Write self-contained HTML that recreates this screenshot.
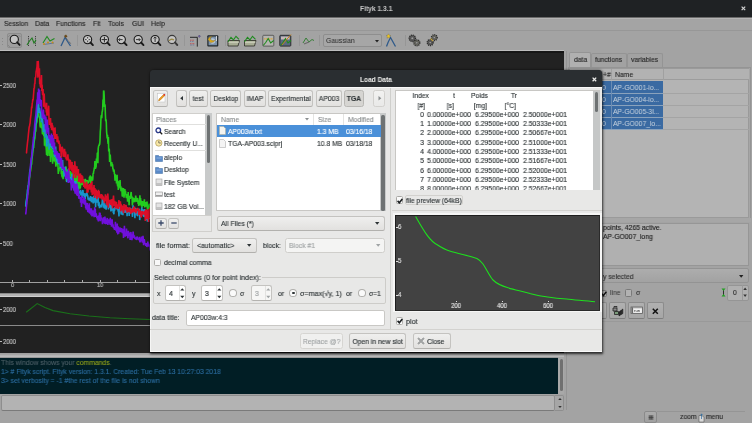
<!DOCTYPE html>
<html><head><meta charset="utf-8">
<style>
*{margin:0;padding:0;box-sizing:border-box}
html,body{width:752px;height:423px;overflow:hidden;background:#a3a3a3;font-family:"Liberation Sans",sans-serif;font-size:7.3px;color:#222}
.a{position:absolute}
.t{position:absolute;white-space:pre;line-height:1;will-change:transform;transform:scaleX(0.93);transform-origin:0 0;-webkit-text-stroke:0.14px currentColor}
svg{position:absolute;overflow:visible}
</style></head><body>
<div class="a" style="left:0px;top:0px;width:752px;height:17px;background:#1f2224"></div>
<div class="t" style="left:359.8px;top:5.10px;font-size:7.2px;color:#c8c8c8;font-weight:bold;-webkit-text-stroke:0">Fityk 1.3.1</div>
<svg style="left:741px;top:6.2px;" width="5" height="5" viewBox="0 0 5 5"><path d="M0.6 0.6L4.2 4.2M4.2 0.6L0.6 4.2" stroke="#d0d0d0" stroke-width="1.2"/></svg>
<div class="a" style="left:0px;top:17px;width:752px;height:14px;background:#a4a4a4;border-top:1px solid #6a6a6a;border-bottom:1px solid #979797"></div>
<div class="a" style="left:0px;top:18px;width:752px;height:1px;background:#b4b4b4"></div>
<div class="t" style="left:4px;top:20.40px;color:#2a2a2a">Session</div>
<div class="t" style="left:35px;top:20.40px;color:#2a2a2a">Data</div>
<div class="t" style="left:56px;top:20.40px;color:#2a2a2a">Functions</div>
<div class="t" style="left:92.5px;top:20.40px;color:#2a2a2a">Fit</div>
<div class="t" style="left:108px;top:20.40px;color:#2a2a2a">Tools</div>
<div class="t" style="left:131.5px;top:20.40px;color:#2a2a2a">GUI</div>
<div class="t" style="left:151px;top:20.40px;color:#2a2a2a">Help</div>
<div class="a" style="left:0px;top:31px;width:752px;height:20px;background:#a3a3a3"></div>
<div class="a" style="left:0px;top:50px;width:564px;height:1px;background:#bdbdbd"></div>
<div class="a" style="left:1.5px;top:37.5px;width:1.2px;height:1.2px;background:#8a8a8a"></div>
<div class="a" style="left:1.5px;top:40.5px;width:1.2px;height:1.2px;background:#8a8a8a"></div>
<div class="a" style="left:1.5px;top:43.5px;width:1.2px;height:1.2px;background:#8a8a8a"></div>
<div class="a" style="left:7.2px;top:33.1px;width:15.3px;height:15.3px;background:#9e9e9e;border:1px solid #8c8c8c;border-radius:2px"></div>
<div class="a" style="left:77px;top:35px;width:1px;height:11px;background:#969696"></div>
<div class="a" style="left:184px;top:35px;width:1px;height:11px;background:#969696"></div>
<div class="a" style="left:224.5px;top:35px;width:1px;height:11px;background:#969696"></div>
<div class="a" style="left:298.5px;top:35px;width:1px;height:11px;background:#969696"></div>
<div class="a" style="left:319px;top:35px;width:1px;height:11px;background:#969696"></div>
<div class="a" style="left:405px;top:35px;width:1px;height:11px;background:#969696"></div>
<div class="a" style="left:323.3px;top:34.3px;width:59px;height:13px;background:#a6a6a6;border:1px solid #8e8e8e;border-radius:2px"></div>
<div class="t" style="left:325.6px;top:37.00px;color:#2a2a2a;-webkit-text-stroke:0">Gaussian</div>
<svg style="left:374.5px;top:39.5px;" width="5" height="3" viewBox="0 0 5 3"><path d="M0 0h4l-2 2.5z" fill="#222"/></svg>
<svg style="left:0px;top:0px;" width="752" height="60" viewBox="0 0 752 60"><circle cx="14.3" cy="39.4" r="4.1" fill="#c4c4c4" stroke="#1a1a1a" stroke-width="1.1"/><line x1="17.2" y1="42.3" x2="19.6" y2="44.9" stroke="#1a1a1a" stroke-width="1.9" stroke-linecap="round"/><path d="M8.5 36.5l1 -1M8.5 45.5l1 1M20 36.5l-1 -1" stroke="#555" stroke-width="0.6"/><path d="M28.5 36v10M35.5 36v10" stroke="#333" stroke-width="0.9" stroke-dasharray="1.2 1"/><path d="M27 45 L29.5 41 L32 38 L34 43 L36 40" stroke="#1f7a1f" stroke-width="1.1" fill="none"/><path d="M43 43 L47 36.5 L50 41 L54.5 38.5" stroke="#1f8a1f" stroke-width="1.1" fill="none"/><path d="M43.5 44.5 L54 43" stroke="#4a6a9a" stroke-width="0.8"/><circle cx="44" cy="44" r="1" fill="#c88a1a"/><circle cx="48" cy="42.5" r="1" fill="#c88a1a"/><circle cx="52.5" cy="42.5" r="1" fill="#c88a1a"/><path d="M61 46 L65 37.5 L70.5 46" stroke="#2f5a8a" stroke-width="1.3" fill="none"/><path d="M64 36 l2 -1.5 l1.5 2 l-2 1.5z" fill="#6a4a1a"/><path d="M66 38 L71 44" stroke="#555" stroke-width="1" stroke-dasharray="1 0.8"/><circle cx="87.6" cy="39.6" r="4.1" fill="#c4c4c4" stroke="#1a1a1a" stroke-width="1.1"/><line x1="90.5" y1="42.5" x2="92.89999999999999" y2="45.1" stroke="#1a1a1a" stroke-width="1.9" stroke-linecap="round"/><path d="M85.0 39.6h5.2M87.6 37.0v5.2" stroke="#3a3a3a" stroke-width="0.9"/><circle cx="87.6" cy="39.6" r="1" fill="#e8e8e8"/><circle cx="104.4" cy="39.6" r="4.1" fill="#c4c4c4" stroke="#1a1a1a" stroke-width="1.1"/><line x1="107.30000000000001" y1="42.5" x2="109.7" y2="45.1" stroke="#1a1a1a" stroke-width="1.9" stroke-linecap="round"/><path d="M101.6 39.6h5.6M104.4 36.8v5.6" stroke="#2a2a2a" stroke-width="1"/><circle cx="121.3" cy="39.6" r="4.1" fill="#c4c4c4" stroke="#1a1a1a" stroke-width="1.1"/><line x1="124.2" y1="42.5" x2="126.6" y2="45.1" stroke="#1a1a1a" stroke-width="1.9" stroke-linecap="round"/><path d="M118.6 39.6h4M120 38.2l-1.4 1.4l1.4 1.4" stroke="#2a2a2a" stroke-width="0.9" fill="none"/><circle cx="138.2" cy="39.6" r="4.1" fill="#c4c4c4" stroke="#1a1a1a" stroke-width="1.1"/><line x1="141.1" y1="42.5" x2="143.5" y2="45.1" stroke="#1a1a1a" stroke-width="1.9" stroke-linecap="round"/><path d="M136 39.6h4.2M138.8 38.2l1.4 1.4l-1.4 1.4" stroke="#2a2a2a" stroke-width="0.9" fill="none"/><circle cx="155.1" cy="39.6" r="4.1" fill="#c4c4c4" stroke="#1a1a1a" stroke-width="1.1"/><line x1="158.0" y1="42.5" x2="160.4" y2="45.1" stroke="#1a1a1a" stroke-width="1.9" stroke-linecap="round"/><path d="M155.1 37v5M153.6 38.4l1.5 -1.5l1.5 1.5" stroke="#2a2a2a" stroke-width="0.9" fill="none"/><circle cx="172" cy="39.5" r="4.1" fill="#c4c4c4" stroke="#3a3a3a" stroke-width="1.1"/><line x1="174.9" y1="42.4" x2="177.3" y2="45.0" stroke="#3a3a3a" stroke-width="1.9" stroke-linecap="round"/><path d="M169 41 q2 -3 5 -1" stroke="#9a8a4a" stroke-width="1.3" fill="none"/><path d="M190 37.3h7.3v9.3" stroke="#1a1a1a" stroke-width="0.9" fill="none"/><path d="M190 40.2h1.5M192.3 40.2h1.5M190 43.7h1.5M192.3 43.7h2" stroke="#c05050" stroke-width="0.9"/><path d="M190 41.5h1.2M192 41.5h1.5M190 45h2.2M192.8 45h1.5" stroke="#5a6a9a" stroke-width="0.6"/><path d="M199.3 35l1.3 1.3l-1.3 1.3l-1.3 -1.3z" fill="#6a5a9a" stroke="#3a3a5a" stroke-width="0.3"/><rect x="207.3" y="35.2" width="11" height="11.3" rx="1" fill="#1e2428"/><rect x="208.5" y="36.5" width="8.6" height="8.8" fill="#7a90a8"/><circle cx="212.5" cy="41" r="2.8" fill="#b8c8d8"/><path d="M216.5 36v5" stroke="#e8e8e8" stroke-width="0.8"/><path d="M208 39.5 q1 -3.5 4.5 -3 q-3 1 -2 3 q2 2 5 0.5 q-2 3 -5 2.5z" fill="#d8a820" stroke="#6a5010" stroke-width="0.3"/><path d="M228.0 40.5 h11.5 l-1.5 5.5 h-10z" fill="#a8ad95" stroke="#2a2a22" stroke-width="0.8"/><path d="M228.5 42.2 h10.5" stroke="#d8dac8" stroke-width="0.9"/><path d="M228.0 41.8 l3 -4.5 l2.5 2.5 l2.5 -3.5 l3 3" stroke="#1f8a1f" stroke-width="1.1" fill="none"/><path d="M244.5 40.5 h11.5 l-1.5 5.5 h-10z" fill="#a8ad95" stroke="#2a2a22" stroke-width="0.8"/><path d="M245 42.2 h10.5" stroke="#d8dac8" stroke-width="0.9"/><path d="M244.5 41.8 l3 -4.5 l2.5 2.5 l2.5 -3.5 l3 3" stroke="#1f8a1f" stroke-width="1.1" fill="none"/><rect x="262.8" y="35.3" width="11" height="10.8" rx="0.8" fill="#b4b4b0" stroke="#4a4a4a" stroke-width="0.8"/><path d="M264 38.8h9" stroke="#d8a840" stroke-width="1.3" stroke-dasharray="1.2 0.5"/><path d="M263.2 45.5 l2.5 -3 l2.5 -4 l2.5 4.5 l3 -2.5" stroke="#1f8a1f" stroke-width="1.1" fill="none"/><rect x="279.8" y="35.3" width="11" height="10.8" rx="0.8" fill="#5a6a80" stroke="#222" stroke-width="0.9"/><rect x="281" y="36.5" width="8.6" height="3" fill="#c8b8b8"/><path d="M280.5 45.5 l2.5 -3 l2.5 -4 l2.5 4.5 l3 -2.5" stroke="#1f8a1f" stroke-width="1.1" fill="none"/><path d="M282 45 l9 -10.5" stroke="#c08020" stroke-width="1"/><path d="M303 43 l3 -5 l3 4 l3 -2.5 l2 1" stroke="#2a7a2a" stroke-width="0.9" fill="none"/><path d="M304 44 l5 -2" stroke="#6a6a6a" stroke-width="1.2"/><path d="M386.5 46.5 Q388 42 390.5 37.5 Q393 42 395.5 46.5" stroke="#2f5a8a" stroke-width="1.3" fill="none"/><path d="M388.5 33.8 l0.8 1.5 l1.6 0.2 l-1.2 1.1 l0.3 1.6 l-1.5 -0.8 l-1.5 0.8 l0.3 -1.6 l-1.2 -1.1 l1.6 -0.2z" fill="#f0c820" stroke="#555" stroke-width="0.3"/><circle cx="412.3" cy="38.3" r="3.2" fill="#5a5a5a" stroke="#2a2a2a" stroke-width="1.3" stroke-dasharray="1 0.9"/><circle cx="412.3" cy="38.3" r="1.2160000000000002" fill="#a3a3a3" stroke="#333" stroke-width="0.4"/><circle cx="416.8" cy="42.8" r="3" fill="#6a6a62" stroke="#2a2a2a" stroke-width="1.3" stroke-dasharray="1 0.9"/><circle cx="416.8" cy="42.8" r="1.1400000000000001" fill="#a3a3a3" stroke="#333" stroke-width="0.4"/><circle cx="434.3" cy="37.6" r="2.9" fill="#6a6a62" stroke="#2a2a2a" stroke-width="1.3" stroke-dasharray="1 0.9"/><circle cx="434.3" cy="37.6" r="1.1019999999999999" fill="#a3a3a3" stroke="#333" stroke-width="0.4"/><circle cx="430.2" cy="42.6" r="3" fill="#5a5a5a" stroke="#2a2a2a" stroke-width="1.3" stroke-dasharray="1 0.9"/><circle cx="430.2" cy="42.6" r="1.1400000000000001" fill="#a3a3a3" stroke="#333" stroke-width="0.4"/><path d="M430.5 38.5 l2.5 2.5" stroke="#c0a040" stroke-width="1.3"/></svg>
<div class="a" style="left:0px;top:51px;width:564px;height:242px;background:#222222;border-top:2px solid #161616"></div>
<div class="a" style="left:0px;top:293px;width:564px;height:4px;background:#b4b4b4;border-top:1px solid #8a8a8a;border-bottom:1px solid #d0d0d0"></div>
<div class="a" style="left:0px;top:297px;width:564px;height:55.5px;background:#212121"></div>
<div class="a" style="left:0px;top:325px;width:564px;height:1px;background:#8a8a8a"></div>
<div class="a" style="left:0px;top:352.5px;width:564px;height:5.5px;background:linear-gradient(#9c9c9c 0%,#a8a8a8 40%,#c4c4c4 65%,#a0a0a0 85%,#8a8a8a 100%)"></div>
<div class="a" style="left:0px;top:84.5px;width:2.4px;height:1px;background:#b8b8b8"></div>
<div class="t" style="left:2.6px;top:82.80px;font-size:6.3px;color:#c4c4c4">2500</div>
<div class="a" style="left:0px;top:124.0px;width:2.4px;height:1px;background:#b8b8b8"></div>
<div class="t" style="left:2.6px;top:122.30px;font-size:6.3px;color:#c4c4c4">2000</div>
<div class="a" style="left:0px;top:163.5px;width:2.4px;height:1px;background:#b8b8b8"></div>
<div class="t" style="left:2.6px;top:161.80px;font-size:6.3px;color:#c4c4c4">1500</div>
<div class="a" style="left:0px;top:203.0px;width:2.4px;height:1px;background:#b8b8b8"></div>
<div class="t" style="left:2.6px;top:201.30px;font-size:6.3px;color:#c4c4c4">1000</div>
<div class="a" style="left:0px;top:242.5px;width:2.4px;height:1px;background:#b8b8b8"></div>
<div class="t" style="left:2.6px;top:240.80px;font-size:6.3px;color:#c4c4c4">500</div>
<div class="a" style="left:0px;top:282px;width:564px;height:1px;background:#a0a0a0"></div>
<div class="a" style="left:11.7px;top:280px;width:1px;height:2.2px;background:#b0b0b0"></div>
<div class="a" style="left:29.259999999999998px;top:280px;width:1px;height:2.2px;background:#b0b0b0"></div>
<div class="a" style="left:46.81999999999999px;top:280px;width:1px;height:2.2px;background:#b0b0b0"></div>
<div class="a" style="left:64.38px;top:280px;width:1px;height:2.2px;background:#b0b0b0"></div>
<div class="a" style="left:81.94px;top:280px;width:1px;height:2.2px;background:#b0b0b0"></div>
<div class="a" style="left:99.5px;top:280px;width:1px;height:2.2px;background:#b0b0b0"></div>
<div class="a" style="left:117.05999999999999px;top:280px;width:1px;height:2.2px;background:#b0b0b0"></div>
<div class="a" style="left:134.61999999999998px;top:280px;width:1px;height:2.2px;background:#b0b0b0"></div>
<div class="a" style="left:152.17999999999998px;top:280px;width:1px;height:2.2px;background:#b0b0b0"></div>
<div class="a" style="left:169.73999999999998px;top:280px;width:1px;height:2.2px;background:#b0b0b0"></div>
<div class="a" style="left:187.29999999999998px;top:280px;width:1px;height:2.2px;background:#b0b0b0"></div>
<div class="a" style="left:204.85999999999999px;top:280px;width:1px;height:2.2px;background:#b0b0b0"></div>
<div class="a" style="left:222.41999999999996px;top:280px;width:1px;height:2.2px;background:#b0b0b0"></div>
<div class="a" style="left:239.97999999999996px;top:280px;width:1px;height:2.2px;background:#b0b0b0"></div>
<div class="a" style="left:257.53999999999996px;top:280px;width:1px;height:2.2px;background:#b0b0b0"></div>
<div class="a" style="left:275.09999999999997px;top:280px;width:1px;height:2.2px;background:#b0b0b0"></div>
<div class="a" style="left:292.65999999999997px;top:280px;width:1px;height:2.2px;background:#b0b0b0"></div>
<div class="a" style="left:310.21999999999997px;top:280px;width:1px;height:2.2px;background:#b0b0b0"></div>
<div class="a" style="left:327.78px;top:280px;width:1px;height:2.2px;background:#b0b0b0"></div>
<div class="a" style="left:345.34px;top:280px;width:1px;height:2.2px;background:#b0b0b0"></div>
<div class="a" style="left:362.9px;top:280px;width:1px;height:2.2px;background:#b0b0b0"></div>
<div class="a" style="left:380.46px;top:280px;width:1px;height:2.2px;background:#b0b0b0"></div>
<div class="a" style="left:398.02px;top:280px;width:1px;height:2.2px;background:#b0b0b0"></div>
<div class="a" style="left:415.58px;top:280px;width:1px;height:2.2px;background:#b0b0b0"></div>
<div class="a" style="left:433.13999999999993px;top:280px;width:1px;height:2.2px;background:#b0b0b0"></div>
<div class="a" style="left:450.69999999999993px;top:280px;width:1px;height:2.2px;background:#b0b0b0"></div>
<div class="a" style="left:468.25999999999993px;top:280px;width:1px;height:2.2px;background:#b0b0b0"></div>
<div class="a" style="left:485.81999999999994px;top:280px;width:1px;height:2.2px;background:#b0b0b0"></div>
<div class="a" style="left:503.37999999999994px;top:280px;width:1px;height:2.2px;background:#b0b0b0"></div>
<div class="a" style="left:520.9399999999999px;top:280px;width:1px;height:2.2px;background:#b0b0b0"></div>
<div class="a" style="left:538.5px;top:280px;width:1px;height:2.2px;background:#b0b0b0"></div>
<div class="a" style="left:556.0600000000001px;top:280px;width:1px;height:2.2px;background:#b0b0b0"></div>
<div class="t" style="left:10.8px;top:281.90px;font-size:6px;color:#b8b8b8">0</div>
<div class="t" style="left:97.2px;top:281.90px;font-size:6px;color:#b8b8b8">10</div>
<div class="a" style="left:0px;top:308.5px;width:2.4px;height:1px;background:#b8b8b8"></div>
<div class="t" style="left:2.6px;top:306.80px;font-size:6.3px;color:#c4c4c4">2000</div>
<div class="a" style="left:0px;top:340.5px;width:2.4px;height:1px;background:#b8b8b8"></div>
<div class="t" style="left:2.6px;top:338.80px;font-size:6.3px;color:#c4c4c4">2000</div>
<svg style="left:0;top:51px" width="564" height="242" viewBox="0 51 564 242"><polyline points="25.90 207.0 26.20 204.6 26.50 203.8 26.80 198.7 27.10 198.2 27.40 193.8 27.70 194.6 28.00 191.4 28.30 190.1 28.60 185.9 28.90 184.4 29.20 181.3 29.50 178.4 29.80 176.9 30.10 173.0 30.40 171.5 30.70 170.3 31.00 167.2 31.30 164.3 31.60 164.8 31.90 160.0 32.20 156.8 32.50 155.3 32.80 152.1 33.10 149.8 33.40 147.5 33.70 147.9 34.00 143.1 34.30 140.9 34.60 139.1 34.90 138.3 35.20 133.2 35.50 130.3 35.80 131.8 36.10 124.4 36.40 123.4 36.70 122.3 37.00 122.0 37.30 112.5 37.60 103.5 37.90 114.7 38.20 109.5 38.50 111.4 38.80 116.4 39.10 116.7 39.40 118.2 39.70 116.3 40.00 125.1 40.30 127.3 40.60 122.2 40.90 121.4 41.20 127.7 41.50 127.9 41.80 122.7 42.10 126.5 42.40 134.1 42.70 130.6 43.00 130.9 43.30 134.4 43.60 134.7 43.90 136.1 44.20 129.4 44.50 145.8 44.80 140.7 45.10 137.6 45.40 146.4 45.70 145.0 46.00 145.1 46.30 149.7 46.60 155.0 46.90 148.8 47.20 153.4 47.50 156.1 47.80 144.1 48.10 146.6 48.40 152.2 48.70 143.0 49.00 149.2 49.30 155.8 49.60 155.3 49.90 154.0 50.20 144.9 50.50 161.9 50.80 155.4 51.10 156.8 51.40 156.3 51.70 148.3 52.00 149.9 52.30 151.3 52.60 163.8 52.90 153.8 53.20 156.6 53.50 157.0 53.80 160.7 54.10 160.9 54.40 160.6 54.70 155.3 55.00 150.8 55.30 161.7 55.60 162.6 55.90 166.8 56.20 162.3 56.50 160.9 56.80 165.2 57.10 158.5 57.40 160.9 57.70 161.6 58.00 166.9 58.30 174.0 58.60 169.6 58.90 171.5 59.20 168.7 59.50 169.4 59.80 167.3 60.10 168.4 60.40 161.2 60.70 166.2 61.00 166.4 61.30 174.2 61.60 173.7 61.90 175.6 62.20 177.3 62.50 170.8 62.80 175.8 63.10 179.2 63.40 172.4 63.70 176.5 64.00 172.2 64.30 167.2 64.60 173.6 64.90 170.4 65.20 173.9 65.50 172.0 65.80 175.0 66.10 166.5 66.40 181.6 66.70 179.2 67.00 173.3 67.30 171.5 67.60 174.9 67.90 177.5 68.20 176.8 68.50 176.9 68.80 168.7 69.10 171.8 69.40 180.7 69.70 177.0 70.00 171.0 70.30 173.5 70.60 171.6 70.90 173.3 71.20 181.2 71.50 176.5 71.80 181.4 72.10 178.2 72.40 172.5 72.70 175.7 73.00 186.2 73.30 175.6 73.60 174.8 73.90 183.1 74.20 179.3 74.50 179.1 74.80 184.5 75.10 173.4 75.40 181.2 75.70 176.2 76.00 175.2 76.30 177.5 76.60 184.6 76.90 180.3 77.20 174.5 77.50 177.3 77.80 186.7 78.10 185.1 78.40 178.0 78.70 190.4 79.00 180.9 79.30 178.2 79.60 182.1 79.90 186.0 80.20 188.5 80.50 186.7 80.80 181.9 81.10 181.6 81.40 178.7 81.70 183.7 82.00 182.1 82.30 185.2 82.60 180.1 82.90 182.5 83.20 181.1 83.50 179.9 83.80 179.8 84.10 180.3 84.40 179.5 84.70 185.5 85.00 183.7 85.30 178.7 85.60 184.9 85.90 184.0 86.20 187.9 86.50 182.0 86.80 181.8 87.10 180.0 87.40 182.7 87.70 183.9 88.00 182.6 88.30 180.7 88.60 183.2 88.90 181.2 89.20 181.4 89.50 176.8 89.80 180.5 90.10 175.9 90.40 176.0 90.70 179.2 91.00 185.7 91.30 181.4 91.60 177.5 91.90 176.5 92.20 180.0 92.50 180.6 92.80 179.2 93.10 173.3 93.40 173.8 93.70 171.1 94.00 170.5 94.30 167.5 94.60 168.9 94.90 161.0 95.20 163.7 95.50 169.0 95.80 163.1 96.10 167.4 96.40 158.5 96.70 160.0 97.00 161.0 97.30 153.4 97.60 152.7 97.90 163.3 98.20 148.8 98.50 146.7 98.80 145.3 99.10 145.8 99.40 143.5 99.70 144.6 100.00 140.2 100.30 131.6 100.60 128.1 100.90 119.8 101.20 115.7 101.50 115.4 101.80 118.3 102.10 111.9 102.40 111.4 102.70 108.4 103.00 99.6 103.30 106.7 103.60 90.6 103.90 91.3 104.20 95.9 104.50 106.9 104.80 104.6 105.10 105.5 105.40 114.5 105.70 121.2 106.00 119.3 106.30 122.3 106.60 131.8 106.90 134.9 107.20 138.4 107.50 134.8 107.80 141.3 108.10 143.8 108.40 137.1 108.70 151.4 109.00 149.1 109.30 149.5 109.60 162.0 109.90 155.7 110.20 154.5 110.50 159.2 110.80 163.7 111.10 166.4 111.40 164.1 111.70 162.1 112.00 163.8 112.30 164.4 112.60 164.5 112.90 169.4 113.20 168.7 113.50 171.7 113.80 169.5 114.10 170.4 114.40 173.9 114.70 174.3 115.00 180.7 115.30 174.4 115.60 179.4 115.90 179.5 116.20 175.8 116.50 183.4 116.80 182.0 117.10 174.7 117.40 184.6 117.70 186.3 118.00 180.9 118.30 190.0 118.60 185.2 118.90 181.3 119.20 187.7 119.50 185.1 119.80 182.3 120.10 180.1 120.40 188.7 120.70 186.0 121.00 191.2 121.30 190.6 121.60 187.9 121.90 188.2 122.20 196.1 122.50 196.2 122.80 193.4 123.10 190.0 123.40 188.2 123.70 190.5 124.00 197.6 124.30 193.9 124.60 191.8 124.90 189.0 125.20 193.9 125.50 190.8 125.80 194.0 126.10 196.7 126.40 198.1 126.70 195.4 127.00 194.1 127.30 196.3 127.60 201.7 127.90 197.4 128.20 192.0 128.50 201.8 128.80 197.8 129.10 205.3 129.40 195.8 129.70 197.1 130.00 196.6 130.30 198.9 130.60 196.0 130.90 193.3 131.20 192.0 131.50 197.8 131.80 196.7 132.10 196.7 132.40 205.4 132.70 201.3 133.00 202.4 133.30 197.5 133.60 200.1 133.90 198.6 134.20 198.8 134.50 201.9 134.80 201.6 135.10 200.8 135.40 200.4 135.70 195.6 136.00 197.9 136.30 201.6 136.60 199.4 136.90 198.2 137.20 201.9 137.50 198.0 137.80 198.9 138.10 203.9 138.40 200.2 138.70 205.9 139.00 203.2 139.30 204.2 139.60 205.3 139.90 195.3 140.20 201.8 140.50 198.2 140.80 200.8 141.10 202.0 141.40 206.3 141.70 202.4 142.00 207.7 142.30 201.1 142.60 202.7 142.90 203.3 143.20 206.0 143.50 203.0 143.80 201.4 144.10 202.4 144.40 199.2 144.70 207.4 145.00 206.0 145.30 205.1 145.60 204.7 145.90 202.1 146.20 202.8 146.50 206.6 146.80 201.9 147.10 202.0 147.40 209.3 147.70 209.3 148.00 205.6 148.30 206.4 148.60 205.4 148.90 209.3 149.20 203.7 149.50 205.4 149.80 206.7 150.10 209.7 150.40 204.7 150.70 206.3 151.00 204.2 151.30 203.8 151.60 203.9 151.90 206.2" fill="none" stroke="#22cc1e" stroke-width="1.6" stroke-linejoin="bevel"/><polyline points="25.70 206.4 26.00 201.9 26.30 200.4 26.60 198.8 26.90 197.6 27.20 193.8 27.50 189.8 27.80 189.2 28.10 185.3 28.40 185.3 28.70 181.3 29.00 181.0 29.30 176.6 29.60 173.2 29.90 170.3 30.20 169.0 30.50 167.5 30.80 165.9 31.10 162.4 31.40 158.8 31.70 157.8 32.00 153.1 32.30 152.9 32.60 149.0 32.90 149.2 33.20 146.2 33.50 143.0 33.80 138.9 34.10 138.4 34.40 135.7 34.70 132.1 35.00 129.6 35.30 129.6 35.60 125.0 35.90 123.6 36.20 122.4 36.50 116.3 36.80 118.1 37.10 117.8 37.40 108.0 37.70 104.2 38.00 100.5 38.30 111.2 38.60 96.4 38.90 113.1 39.20 110.7 39.50 107.9 39.80 109.7 40.10 111.3 40.40 112.9 40.70 118.8 41.00 112.2 41.30 121.7 41.60 122.2 41.90 117.8 42.20 122.5 42.50 118.5 42.80 122.1 43.10 125.0 43.40 132.1 43.70 124.6 44.00 125.2 44.30 126.9 44.60 127.0 44.90 124.2 45.20 137.7 45.50 128.1 45.80 129.3 46.10 129.8 46.40 136.6 46.70 145.5 47.00 146.4 47.30 140.8 47.60 139.1 47.90 138.6 48.20 135.3 48.50 143.1 48.80 140.3 49.10 149.7 49.40 140.8 49.70 138.5 50.00 135.8 50.30 136.6 50.60 146.9 50.90 146.4 51.20 141.0 51.50 140.2 51.80 148.0 52.10 146.1 52.40 149.0 52.70 148.7 53.00 146.3 53.30 143.2 53.60 151.2 53.90 151.6 54.20 152.6 54.50 156.2 54.80 156.7 55.10 151.8 55.40 156.6 55.70 146.6 56.00 158.2 56.30 156.1 56.60 160.8 56.90 161.3 57.20 154.5 57.50 158.2 57.80 163.6 58.10 157.9 58.40 160.9 58.70 158.9 59.00 164.1 59.30 163.6 59.60 160.0 59.90 158.4 60.20 156.1 60.50 168.1 60.80 163.9 61.10 163.6 61.40 164.6 61.70 163.6 62.00 169.9 62.30 170.1 62.60 160.0 62.90 168.5 63.20 169.4 63.50 168.3 63.80 170.3 64.10 176.4 64.40 171.9 64.70 175.5 65.00 175.2 65.30 166.5 65.60 178.8 65.90 173.6 66.20 172.2 66.50 176.7 66.80 182.1 67.10 171.7 67.40 172.5 67.70 176.6 68.00 169.4 68.30 172.2 68.60 176.8 68.90 179.6 69.20 179.3 69.50 180.8 69.80 182.1 70.10 177.1 70.40 177.9 70.70 178.4 71.00 178.8 71.30 184.2 71.60 183.8 71.90 174.0 72.20 183.3 72.50 178.3 72.80 178.6 73.10 187.3 73.40 187.8 73.70 187.7 74.00 186.4 74.30 190.7 74.60 181.0 74.90 188.2 75.20 183.4 75.50 184.1 75.80 181.0 76.10 192.2 76.40 193.4 76.70 190.8 77.00 186.3 77.30 189.3 77.60 185.5 77.90 188.6 78.20 195.0 78.50 195.7 78.80 193.0 79.10 193.7 79.40 190.9 79.70 192.7 80.00 191.1 80.30 193.4 80.60 189.9 80.90 195.5 81.20 191.6 81.50 193.2 81.80 192.3 82.10 197.9 82.40 196.0 82.70 190.6 83.00 190.3 83.30 195.5 83.60 194.1 83.90 193.2 84.20 194.8 84.50 199.7 84.80 194.2 85.10 199.3 85.40 193.2 85.70 194.2 86.00 196.2 86.30 195.1 86.60 193.9 86.90 192.3 87.20 194.8 87.50 194.8 87.80 196.2 88.10 199.8 88.40 198.3 88.70 200.5 89.00 197.6 89.30 198.6 89.60 199.3 89.90 199.8 90.20 200.9 90.50 196.1 90.80 199.4 91.10 198.9 91.40 202.3 91.70 201.2 92.00 196.9 92.30 200.3 92.60 201.3 92.90 199.5 93.20 203.4 93.50 200.5 93.80 195.8 94.10 201.0 94.40 202.6 94.70 197.8 95.00 202.7 95.30 192.6 95.60 207.2 95.90 196.7 96.20 199.7 96.50 200.4 96.80 197.2 97.10 202.7 97.40 199.1 97.70 197.9 98.00 195.1 98.30 204.6 98.60 206.2 98.90 201.9 99.20 203.6 99.50 208.1 99.80 204.5 100.10 207.0 100.40 206.7 100.70 206.0 101.00 205.4 101.30 207.5 101.60 204.7 101.90 204.5 102.20 202.0 102.50 198.0 102.80 201.6 103.10 203.5 103.40 207.7 103.70 203.6 104.00 198.7 104.30 206.9 104.60 208.7 104.90 206.0 105.20 206.0 105.50 206.1 105.80 205.1 106.10 209.7 106.40 203.0 106.70 203.3 107.00 201.3 107.30 204.3 107.60 203.8 107.90 204.0 108.20 206.7 108.50 209.4 108.80 202.2 109.10 206.7 109.40 204.4 109.70 204.6 110.00 205.3 110.30 207.9 110.60 202.0 110.90 211.5 111.20 206.8 111.50 205.0 111.80 202.4 112.10 210.5 112.40 209.5 112.70 210.2 113.00 208.1 113.30 212.9 113.60 212.5 113.90 214.3 114.20 209.0 114.50 210.9 114.80 207.0 115.10 208.6 115.40 207.4 115.70 208.5 116.00 208.7 116.30 208.6 116.60 208.6 116.90 209.2 117.20 207.6 117.50 206.8 117.80 207.6 118.10 211.0 118.40 211.2 118.70 212.4 119.00 216.4 119.30 206.3 119.60 211.9 119.90 205.6 120.20 207.9 120.50 207.2 120.80 209.9 121.10 213.7 121.40 214.4 121.70 211.0 122.00 212.9 122.30 211.4 122.60 206.5 122.90 215.1 123.20 208.5 123.50 208.9 123.80 210.3 124.10 207.7 124.40 208.7 124.70 212.9 125.00 208.0 125.30 209.0 125.60 205.9 125.90 205.5 126.20 212.0 126.50 212.4 126.80 210.2 127.10 216.3 127.40 208.5 127.70 213.0 128.00 209.4 128.30 211.5 128.60 213.2 128.90 207.8 129.20 215.9 129.50 211.7 129.80 212.2 130.10 211.6 130.40 213.2 130.70 208.6 131.00 208.7 131.30 213.3 131.60 211.7 131.90 211.2 132.20 213.3 132.50 216.9 132.80 209.5 133.10 205.4 133.40 211.6 133.70 207.6 134.00 211.9 134.30 209.9 134.60 212.8 134.90 218.1 135.20 212.5 135.50 208.0 135.80 209.7 136.10 209.8 136.40 208.8 136.70 214.3 137.00 213.6 137.30 216.0 137.60 215.5 137.90 212.8 138.20 211.5 138.50 211.8 138.80 213.2 139.10 211.4 139.40 208.7 139.70 220.1 140.00 217.5 140.30 212.7 140.60 212.2 140.90 212.5 141.20 214.9 141.50 212.7 141.80 207.4 142.10 214.5 142.40 215.3 142.70 209.9 143.00 209.7 143.30 213.6 143.60 210.7 143.90 216.9 144.20 216.4 144.50 209.1 144.80 215.4 145.10 209.9 145.40 212.1 145.70 218.0 146.00 213.5 146.30 216.1 146.60 213.1 146.90 220.1 147.20 214.4 147.50 221.7 147.80 216.1 148.10 213.5 148.40 214.8 148.70 213.9 149.00 219.0 149.30 211.7 149.60 217.3 149.90 219.0 150.20 217.9 150.50 211.1 150.80 218.6 151.10 217.4 151.40 218.2 151.70 212.2 152.00 215.6" fill="none" stroke="#1896cc" stroke-width="1.6" stroke-linejoin="bevel"/><polyline points="25.70 214.5 26.00 212.2 26.30 208.6 26.60 205.5 26.90 202.0 27.20 199.7 27.50 197.9 27.80 194.3 28.10 192.0 28.40 188.2 28.70 185.4 29.00 182.2 29.30 177.4 29.60 177.0 29.90 173.7 30.20 170.7 30.50 165.4 30.80 162.3 31.10 160.3 31.40 157.8 31.70 155.7 32.00 152.3 32.30 150.0 32.60 145.7 32.90 143.8 33.20 141.0 33.50 136.7 33.80 136.7 34.10 132.3 34.40 130.1 34.70 124.9 35.00 121.7 35.30 119.3 35.60 116.6 35.90 114.6 36.20 111.1 36.50 107.2 36.80 103.6 37.10 99.5 37.40 104.6 37.70 92.2 38.00 94.1 38.30 96.2 38.60 88.5 38.90 96.9 39.20 104.0 39.50 89.9 39.80 98.9 40.10 101.2 40.40 99.2 40.70 106.4 41.00 105.1 41.30 100.0 41.60 111.6 41.90 112.1 42.20 114.5 42.50 118.0 42.80 114.4 43.10 114.6 43.40 109.6 43.70 119.2 44.00 115.1 44.30 117.0 44.60 114.7 44.90 117.3 45.20 120.4 45.50 129.5 45.80 116.5 46.10 120.1 46.40 128.0 46.70 133.9 47.00 131.0 47.30 121.3 47.60 119.5 47.90 132.3 48.20 128.5 48.50 127.7 48.80 137.2 49.10 138.5 49.40 135.3 49.70 136.4 50.00 138.0 50.30 143.5 50.60 140.2 50.90 140.6 51.20 141.5 51.50 133.6 51.80 146.0 52.10 145.4 52.40 144.4 52.70 135.1 53.00 141.3 53.30 147.9 53.60 138.1 53.90 145.4 54.20 150.9 54.50 142.5 54.80 154.7 55.10 151.3 55.40 149.3 55.70 152.0 56.00 154.0 56.30 152.7 56.60 157.4 56.90 151.2 57.20 152.8 57.50 159.0 57.80 155.7 58.10 152.8 58.40 160.4 58.70 163.0 59.00 156.3 59.30 153.4 59.60 158.7 59.90 159.2 60.20 159.3 60.50 166.3 60.80 157.8 61.10 166.9 61.40 158.1 61.70 160.5 62.00 166.3 62.30 168.8 62.60 168.4 62.90 167.1 63.20 166.9 63.50 167.6 63.80 169.7 64.10 167.6 64.40 169.8 64.70 171.5 65.00 170.0 65.30 173.3 65.60 173.2 65.90 179.0 66.20 173.6 66.50 171.5 66.80 172.3 67.10 174.2 67.40 178.1 67.70 174.2 68.00 177.4 68.30 183.0 68.60 168.3 68.90 173.9 69.20 179.2 69.50 180.4 69.80 180.4 70.10 178.7 70.40 182.9 70.70 182.2 71.00 179.9 71.30 190.5 71.60 183.9 71.90 181.4 72.20 183.4 72.50 183.5 72.80 184.5 73.10 176.6 73.40 184.2 73.70 189.7 74.00 182.9 74.30 187.1 74.60 191.0 74.90 191.2 75.20 193.7 75.50 183.8 75.80 188.7 76.10 189.3 76.40 192.9 76.70 194.9 77.00 183.5 77.30 195.9 77.60 188.3 77.90 195.6 78.20 189.2 78.50 195.0 78.80 198.8 79.10 195.0 79.40 196.6 79.70 199.0 80.00 197.4 80.30 197.1 80.60 202.6 80.90 201.4 81.20 197.6 81.50 207.0 81.80 195.8 82.10 202.6 82.40 199.3 82.70 200.9 83.00 203.1 83.30 202.0 83.60 203.6 83.90 197.4 84.20 197.9 84.50 204.7 84.80 200.3 85.10 200.5 85.40 199.6 85.70 208.2 86.00 207.0 86.30 209.6 86.60 202.8 86.90 206.0 87.20 203.0 87.50 209.0 87.80 211.8 88.10 204.9 88.40 212.5 88.70 211.2 89.00 208.2 89.30 203.3 89.60 213.6 89.90 209.6 90.20 208.4 90.50 211.6 90.80 211.8 91.10 215.2 91.40 208.2 91.70 214.6 92.00 215.9 92.30 216.0 92.60 211.6 92.90 210.2 93.20 215.5 93.50 213.1 93.80 213.4 94.10 217.3 94.40 212.8 94.70 207.3 95.00 212.9 95.30 209.0 95.60 216.8 95.90 215.6 96.20 213.3 96.50 215.2 96.80 217.8 97.10 215.9 97.40 219.6 97.70 216.0 98.00 219.3 98.30 220.8 98.60 221.3 98.90 215.3 99.20 219.8 99.50 212.5 99.80 214.9 100.10 212.7 100.40 221.1 100.70 215.1 101.00 218.5 101.30 218.2 101.60 218.9 101.90 217.5 102.20 219.9 102.50 224.3 102.80 219.8 103.10 221.2 103.40 222.7 103.70 219.6 104.00 217.0 104.30 219.0 104.60 223.6 104.90 216.5 105.20 219.4 105.50 223.9 105.80 223.5 106.10 221.6 106.40 223.9 106.70 222.3 107.00 219.0 107.30 218.1 107.60 220.7 107.90 225.0 108.20 221.3 108.50 220.6 108.80 221.1 109.10 219.3 109.40 223.2 109.70 220.6 110.00 224.8 110.30 217.9 110.60 225.0 110.90 222.7 111.20 219.5 111.50 226.6 111.80 224.2 112.10 219.3 112.40 223.0 112.70 226.2 113.00 224.4 113.30 227.8 113.60 227.8 113.90 227.8 114.20 227.1 114.50 229.9 114.80 228.3 115.10 228.0 115.40 221.7 115.70 229.4 116.00 230.6 116.30 226.8 116.60 226.5 116.90 232.7 117.20 223.6 117.50 229.4 117.80 234.4 118.10 226.2 118.40 230.5 118.70 233.6 119.00 228.8 119.30 230.7 119.60 231.7 119.90 227.4 120.20 229.6 120.50 230.7 120.80 232.2 121.10 230.2 121.40 230.0 121.70 228.2 122.00 230.0 122.30 233.2 122.60 231.4 122.90 229.3 123.20 229.5 123.50 238.0 123.80 234.6 124.10 233.6 124.40 225.9 124.70 233.8 125.00 233.7 125.30 236.7 125.60 233.8 125.90 232.8 126.20 234.3 126.50 228.6 126.80 235.9 127.10 234.3 127.40 232.0 127.70 237.0 128.00 238.3 128.30 230.8 128.60 232.7 128.90 235.1 129.20 235.0 129.50 233.8 129.80 232.6 130.10 240.0 130.40 237.6 130.70 232.6 131.00 232.4 131.30 239.6 131.60 238.1 131.90 240.2 132.20 238.0 132.50 234.2 132.80 237.0 133.10 231.6 133.40 235.0 133.70 236.7 134.00 238.2 134.30 235.5 134.60 237.0 134.90 238.5 135.20 238.5 135.50 239.2 135.80 238.4 136.10 237.3 136.40 240.0 136.70 238.5 137.00 236.6 137.30 237.2 137.60 238.8 137.90 238.7 138.20 239.5 138.50 239.2 138.80 239.8 139.10 239.3 139.40 236.9 139.70 240.8 140.00 242.3 140.30 241.1 140.60 239.9 140.90 241.4 141.20 238.5 141.50 236.6 141.80 241.0 142.10 239.0 142.40 242.8 142.70 239.0 143.00 235.8 143.30 239.4 143.60 245.2 143.90 241.1 144.20 239.1 144.50 240.6 144.80 243.5 145.10 243.6 145.40 243.1 145.70 246.0 146.00 244.5 146.30 243.1 146.60 244.6 146.90 247.0 147.20 245.7 147.50 245.9 147.80 241.6 148.10 243.7 148.40 245.7 148.70 243.7 149.00 246.7 149.30 245.9 149.60 246.7 149.90 244.5 150.20 250.4 150.50 247.8 150.80 245.0 151.10 245.7 151.40 251.1 151.70 245.1 152.00 247.8" fill="none" stroke="#7010dc" stroke-width="1.6" stroke-linejoin="bevel"/><polyline points="26.20 152.9 26.50 153.1 26.80 149.0 27.10 146.6 27.40 143.6 27.70 140.9 28.00 138.8 28.30 135.6 28.60 132.3 28.90 129.6 29.20 126.9 29.50 126.3 29.80 124.3 30.10 123.3 30.40 119.4 30.70 116.7 31.00 114.8 31.30 111.5 31.60 106.5 31.90 108.1 32.20 103.6 32.50 102.2 32.80 99.1 33.10 100.5 33.40 96.2 33.70 92.8 34.00 88.1 34.30 88.7 34.60 83.6 34.90 84.2 35.20 77.8 35.50 77.5 35.80 76.7 36.10 71.5 36.40 70.6 36.70 68.3 37.00 67.1 37.30 61.1 37.60 68.8 37.90 77.6 38.20 60.9 38.50 65.8 38.80 74.3 39.10 70.2 39.40 68.3 39.70 84.1 40.00 83.4 40.30 85.7 40.60 87.3 40.90 87.1 41.20 81.1 41.50 75.1 41.80 91.0 42.10 84.9 42.40 92.0 42.70 95.3 43.00 89.0 43.30 95.1 43.60 106.8 43.90 103.8 44.20 93.6 44.50 101.4 44.80 103.3 45.10 107.1 45.40 108.9 45.70 106.0 46.00 106.3 46.30 112.5 46.60 102.7 46.90 115.7 47.20 112.9 47.50 110.1 47.80 110.7 48.10 115.5 48.40 108.7 48.70 105.7 49.00 119.1 49.30 125.0 49.60 118.7 49.90 120.6 50.20 121.3 50.50 118.0 50.80 125.2 51.10 128.0 51.40 125.5 51.70 130.3 52.00 122.8 52.30 129.2 52.60 125.4 52.90 127.2 53.20 131.2 53.50 131.4 53.80 135.1 54.10 135.0 54.40 127.7 54.70 139.0 55.00 127.4 55.30 134.4 55.60 136.8 55.90 135.8 56.20 138.9 56.50 137.6 56.80 134.0 57.10 142.2 57.40 139.3 57.70 136.3 58.00 141.1 58.30 141.4 58.60 143.6 58.90 140.5 59.20 144.3 59.50 143.5 59.80 151.5 60.10 144.2 60.40 151.5 60.70 146.7 61.00 152.3 61.30 157.8 61.60 147.6 61.90 150.4 62.20 146.7 62.50 148.0 62.80 149.1 63.10 152.2 63.40 156.1 63.70 156.4 64.00 151.5 64.30 154.5 64.60 148.7 64.90 157.2 65.20 154.5 65.50 151.7 65.80 153.6 66.10 159.2 66.40 157.9 66.70 160.5 67.00 156.8 67.30 159.6 67.60 158.6 67.90 154.2 68.20 159.9 68.50 160.5 68.80 158.9 69.10 165.1 69.40 170.7 69.70 168.5 70.00 163.8 70.30 159.7 70.60 163.9 70.90 162.8 71.20 166.2 71.50 170.6 71.80 166.5 72.10 161.9 72.40 172.5 72.70 168.1 73.00 173.3 73.30 165.4 73.60 178.2 73.90 164.9 74.20 170.3 74.50 173.1 74.80 161.2 75.10 168.0 75.40 165.5 75.70 177.9 76.00 174.6 76.30 169.0 76.60 166.5 76.90 166.9 77.20 174.2 77.50 171.1 77.80 175.7 78.10 172.8 78.40 169.0 78.70 182.0 79.00 177.6 79.30 173.8 79.60 175.4 79.90 181.7 80.20 180.3 80.50 173.4 80.80 183.3 81.10 176.3 81.40 180.9 81.70 175.0 82.00 177.3 82.30 182.8 82.60 176.2 82.90 181.1 83.20 182.6 83.50 179.3 83.80 187.0 84.10 184.6 84.40 182.2 84.70 186.6 85.00 188.2 85.30 188.1 85.60 183.8 85.90 187.4 86.20 186.3 86.50 181.6 86.80 184.5 87.10 193.0 87.40 183.6 87.70 188.2 88.00 192.5 88.30 185.7 88.60 187.2 88.90 184.9 89.20 189.4 89.50 183.8 89.80 189.7 90.10 185.6 90.40 189.7 90.70 183.1 91.00 185.4 91.30 192.4 91.60 191.5 91.90 181.3 92.20 195.0 92.50 187.5 92.80 193.4 93.10 194.1 93.40 190.4 93.70 189.9 94.00 185.0 94.30 193.1 94.60 198.0 94.90 188.0 95.20 196.0 95.50 195.0 95.80 195.9 96.10 189.5 96.40 192.8 96.70 194.3 97.00 199.2 97.30 190.9 97.60 192.4 97.90 191.9 98.20 197.4 98.50 189.7 98.80 194.4 99.10 191.1 99.40 194.4 99.70 198.2 100.00 194.2 100.30 198.4 100.60 194.8 100.90 196.3 101.20 196.1 101.50 194.0 101.80 198.3 102.10 199.2 102.40 194.8 102.70 199.6 103.00 197.9 103.30 196.4 103.60 198.4 103.90 200.7 104.20 200.6 104.50 203.1 104.80 199.4 105.10 199.4 105.40 194.2 105.70 197.4 106.00 201.1 106.30 195.9 106.60 196.6 106.90 205.4 107.20 199.6 107.50 196.6 107.80 193.6 108.10 197.7 108.40 207.7 108.70 200.6 109.00 202.8 109.30 203.1 109.60 199.7 109.90 202.4 110.20 201.7 110.50 200.7 110.80 205.0 111.10 199.5 111.40 199.9 111.70 200.3 112.00 206.3 112.30 201.2 112.60 208.4 112.90 198.9 113.20 200.2 113.50 195.5 113.80 200.7 114.10 203.9 114.40 205.9 114.70 201.0 115.00 202.5 115.30 208.5 115.60 202.8 115.90 204.7 116.20 206.5 116.50 201.7 116.80 208.5 117.10 204.3 117.40 207.4 117.70 204.3 118.00 206.1 118.30 209.0 118.60 206.1 118.90 200.1 119.20 204.9 119.50 204.7 119.80 205.4 120.10 206.6 120.40 201.3 120.70 211.5 121.00 203.9 121.30 210.4 121.60 205.5 121.90 205.7 122.20 206.5 122.50 206.0 122.80 208.7 123.10 210.9 123.40 212.7 123.70 213.0 124.00 204.0 124.30 209.6 124.60 209.3 124.90 207.7 125.20 209.0 125.50 208.2 125.80 204.9 126.10 205.9 126.40 211.3 126.70 208.5 127.00 212.8 127.30 207.6 127.60 207.3 127.90 209.4 128.20 209.5 128.50 212.2 128.80 207.9 129.10 212.0 129.40 210.8 129.70 207.3 130.00 209.4 130.30 209.5 130.60 213.0 130.90 213.7 131.20 212.2 131.50 208.8 131.80 212.5 132.10 211.0 132.40 208.8 132.70 212.8 133.00 208.5 133.30 209.9 133.60 207.9 133.90 206.9 134.20 212.0 134.50 206.5 134.80 209.3 135.10 210.2 135.40 212.6 135.70 209.4 136.00 213.5 136.30 209.2 136.60 209.3 136.90 209.3 137.20 210.3 137.50 209.7 137.80 207.8 138.10 209.8 138.40 209.6 138.70 215.1 139.00 209.2 139.30 213.2 139.60 209.7 139.90 214.9 140.20 212.1 140.50 210.9 140.80 215.9 141.10 217.0 141.40 217.1 141.70 215.6 142.00 213.1 142.30 211.1 142.60 211.7 142.90 211.6 143.20 214.7 143.50 212.1 143.80 214.0 144.10 214.0 144.40 213.2 144.70 211.8 145.00 210.7 145.30 220.9 145.60 213.5 145.90 209.4 146.20 210.5 146.50 212.3 146.80 219.3 147.10 214.6 147.40 211.7 147.70 219.3 148.00 209.2 148.30 217.7 148.60 221.9 148.90 214.7 149.20 217.6 149.50 216.8 149.80 207.7 150.10 216.0 150.40 213.5 150.70 207.9 151.00 217.7 151.30 213.7 151.60 216.3 151.90 216.7" fill="none" stroke="#dc0e28" stroke-width="1.6" stroke-linejoin="bevel"/></svg>
<svg style="left:0;top:297px" width="564" height="56" viewBox="0 297 564 56"><polyline points="26.2 312.3 37.2 303.6 45 307.5 53 310.6 70 313.8 89 316 110 317.8 130 318.8 150 319.5 300 322" fill="none" stroke="#1a701a" stroke-width="1.1"/></svg>
<div class="a" style="left:0px;top:358px;width:558px;height:36px;background:#011e25"></div>
<div class="a" style="left:558px;top:357px;width:6px;height:37px;background:#a8a8a8"></div>
<div class="a" style="left:559.8px;top:358.6px;width:3.5px;height:32px;background:#707070;border-radius:1.5px"></div>
<div class="a" style="left:0.5px;top:394.5px;width:554.5px;height:16px;background:#b3b3b3;border:1px solid #8e8e8e;border-bottom-color:#7a7a7a;border-radius:2px"></div>
<div class="a" style="left:555px;top:394.5px;width:8.5px;height:16px;background:#a6a6a6;border:1px solid #8e8e8e;border-left:none;border-radius:0 2px 2px 0"></div>
<svg style="left:557.8px;top:396.5px;" width="4" height="12" viewBox="0 0 4 12"><path d="M0.2 3h3.6l-1.8-2z M0.2 9h3.6l-1.8 2z" fill="#333"/></svg>
<div class="t" style="left:0.5px;top:359.30px;color:#4a5c64">This window shows your <span style="color:#8a9a1a">commands</span>.</div>
<div class="t" style="left:0.5px;top:368.30px;color:#2a6a9c">1&gt; # Fityk script. Fityk version: 1.3.1. Created: Tue Feb 13 10:27:03 2018</div>
<div class="t" style="left:0.5px;top:377.40px;color:#2a6a9c">3&gt; set verbosity = -1 #the rest of the file is not shown</div>
<div class="a" style="left:566px;top:51px;width:1px;height:359px;background:#959595"></div>
<div class="a" style="left:644.3px;top:411.4px;width:12.5px;height:12px;background:linear-gradient(#acacac,#a0a0a0);border:1px solid #8a8a8a;border-radius:2px"></div>
<svg style="left:647.5px;top:414.5px;" width="6" height="5" viewBox="0 0 6 5"><path d="M0.5 1h5M0.5 2.5h5M0.5 4h5M2 0.5v4M3.8 0.5v4" stroke="#333" stroke-width="0.7"/></svg>
<div class="a" style="left:657px;top:411px;width:88px;height:1px;background:#959595"></div>
<div class="t" style="left:679.5px;top:413.40px;color:#2a2a2a">zoom</div>
<svg style="left:698px;top:412.5px;" width="7" height="9" viewBox="0 0 7 9"><path d="M1 2.5h3l2 2v4.5h-5z" fill="#d8d8d8" stroke="#444" stroke-width="0.5"/><path d="M3.5 6v-5M2.3 2.2l1.2-1.2l1.2 1.2" stroke="#2a6aa0" stroke-width="0.7" fill="none"/></svg>
<div class="t" style="left:705.8px;top:413.40px;color:#2a2a2a">menu</div>
<div class="a" style="left:568.9px;top:51.7px;width:22.5px;height:15.8px;background:#b0b0b0;border:1px solid #949494;border-bottom:none;border-radius:2px 2px 0 0"></div>
<div class="t" style="left:573.5px;top:56.10px;color:#2a2a2a">data</div>
<div class="a" style="left:591.2px;top:52.5px;width:36px;height:15px;background:#a2a2a2;border:1px solid #949494;border-bottom:none;border-radius:2px 2px 0 0"></div>
<div class="t" style="left:594.5px;top:56.40px;color:#2a2a2a">functions</div>
<div class="a" style="left:627px;top:52.5px;width:35.8px;height:15px;background:#a2a2a2;border:1px solid #949494;border-bottom:none;border-radius:2px 2px 0 0"></div>
<div class="t" style="left:630.5px;top:56.40px;color:#2a2a2a">variables</div>
<div class="a" style="left:567.5px;top:67.3px;width:183px;height:155px;background:#a6a6a6;border:1px solid #949494"></div>
<div class="a" style="left:569px;top:68.4px;width:180px;height:149.5px;background:#b4b4b4;border:1px solid #9a9a9a"></div>
<div class="a" style="left:569.5px;top:68.9px;width:179px;height:11.5px;background:#b2b2b2;border-bottom:1px solid #9c9c9c"></div>
<div class="a" style="left:611.4px;top:69px;width:0.8px;height:11px;background:#a0a0a0"></div>
<div class="a" style="left:662.8px;top:69px;width:0.8px;height:11px;background:#a0a0a0"></div>
<div class="t" style="left:602.5px;top:70.60px;color:#2a2a2a">+#</div>
<div class="t" style="left:614.8px;top:70.60px;color:#2a2a2a">Name</div>
<div class="a" style="left:569.5px;top:81px;width:93.3px;height:12px;background:#3a6aa2"></div>
<div class="a" style="left:569.5px;top:93px;width:93.3px;height:12px;background:#3a6aa2"></div>
<div class="a" style="left:569.5px;top:105px;width:93.3px;height:12px;background:#3a6aa2"></div>
<div class="a" style="left:569.5px;top:117px;width:93.3px;height:12px;background:#3a6aa2"></div>
<div class="a" style="left:611.4px;top:81px;width:0.8px;height:12px;background:#6a8cb4"></div>
<div class="a" style="left:662.8px;top:92.5px;width:86px;height:1px;background:#a4a4a4"></div>
<div class="a" style="left:569.5px;top:92.5px;width:93.3px;height:1px;background:#8aa2bc"></div>
<div class="t" style="left:613.2px;top:83.70px;color:#ccd6e0;-webkit-text-stroke:0">AP-GO001-lo...</div>
<div class="t" style="left:601.8px;top:83.70px;color:#ccd6e0;-webkit-text-stroke:0">0</div>
<div class="a" style="left:611.4px;top:93px;width:0.8px;height:12px;background:#6a8cb4"></div>
<div class="a" style="left:662.8px;top:104.5px;width:86px;height:1px;background:#a4a4a4"></div>
<div class="a" style="left:569.5px;top:104.5px;width:93.3px;height:1px;background:#8aa2bc"></div>
<div class="t" style="left:613.2px;top:95.70px;color:#ccd6e0;-webkit-text-stroke:0">AP-GO004-lo...</div>
<div class="t" style="left:601.8px;top:95.70px;color:#ccd6e0;-webkit-text-stroke:0">0</div>
<div class="a" style="left:611.4px;top:105px;width:0.8px;height:12px;background:#6a8cb4"></div>
<div class="a" style="left:662.8px;top:116.5px;width:86px;height:1px;background:#a4a4a4"></div>
<div class="a" style="left:569.5px;top:116.5px;width:93.3px;height:1px;background:#8aa2bc"></div>
<div class="t" style="left:613.2px;top:107.70px;color:#ccd6e0;-webkit-text-stroke:0">AP-GO005-3l...</div>
<div class="t" style="left:601.8px;top:107.70px;color:#ccd6e0;-webkit-text-stroke:0">0</div>
<div class="a" style="left:611.4px;top:117px;width:0.8px;height:12px;background:#6a8cb4"></div>
<div class="a" style="left:662.8px;top:128.5px;width:86px;height:1px;background:#a4a4a4"></div>
<div class="a" style="left:569.5px;top:128.5px;width:93.3px;height:1px;background:#8aa2bc"></div>
<div class="t" style="left:613.2px;top:119.70px;color:#ccd6e0;-webkit-text-stroke:0">AP-GO007_lo...</div>
<div class="t" style="left:601.8px;top:119.70px;color:#ccd6e0;-webkit-text-stroke:0">0</div>
<div class="a" style="left:567.5px;top:218px;width:183px;height:4px;background:#a6a6a6"></div>
<div class="a" style="left:567.5px;top:222.5px;width:181.5px;height:43.8px;background:#b0b0b0;border:1px solid #969696"></div>
<div class="t" style="left:603px;top:224.00px;color:#222">points, 4265 active.</div>
<div class="t" style="left:603px;top:233.00px;color:#222">AP-GO007_long</div>
<div class="a" style="left:567.5px;top:268.1px;width:181.5px;height:15.4px;background:linear-gradient(#adadad,#a2a2a2);border:1px solid #939393;border-radius:2px"></div>
<div class="t" style="left:602.5px;top:272.70px;color:#333">y selected</div>
<svg style="left:739px;top:275px;" width="5" height="3" viewBox="0 0 5 3"><path d="M0 0h4.4l-2.2 2.8z" fill="#222"/></svg>
<div class="a" style="left:599px;top:289.6px;width:8px;height:7.2px;background:#b0b0b0;border:1px solid #7a7a7a;border-radius:1.5px"></div>
<svg style="left:600.5px;top:290.5px;" width="6" height="6" viewBox="0 0 6 6"><path d="M0.8 2.8 L2.4 4.6 L5.3 0.8" stroke="#111" stroke-width="1.5" fill="none"/></svg>
<div class="t" style="left:609.9px;top:289.40px;color:#333;-webkit-text-stroke:0">line</div>
<div class="a" style="left:625.4px;top:289px;width:7px;height:7.5px;background:#b2b2b2;border:1.2px solid #7a7a7a;border-radius:1.5px"></div>
<div class="t" style="left:635.5px;top:289.40px;color:#333;-webkit-text-stroke:0.1px">σ</div>
<svg style="left:721px;top:288.3px;" width="5" height="9" viewBox="0 0 5 9"><path d="M2.5 1v7" stroke="#222" stroke-width="0.9"/><path d="M0.5 0.5h4l-2 2.5z M0.5 8.5h4l-2 -2.5z" fill="#20a020"/></svg>
<div class="a" style="left:727px;top:284.5px;width:21.5px;height:16.4px;background:#b0b0b0;border:1px solid #959595;border-radius:2px"></div>
<div class="a" style="left:741.5px;top:285px;width:0.8px;height:15.4px;background:#9a9a9a"></div>
<div class="t" style="left:733.2px;top:289.20px;color:#2a2a2a;font-size:7px">0</div>
<svg style="left:743px;top:287px;" width="5" height="11" viewBox="0 0 5 11"><path d="M0.3 3h3.6L2.1 0.5z M0.3 7.5h3.6L2.1 10z" fill="#333"/></svg>
<div class="a" style="left:590px;top:302.2px;width:17.200000000000045px;height:17.2px;background:linear-gradient(#b0b0b0,#a6a6a6);border:1px solid #8c8c8c;border-bottom-color:#7e7e7e;border-radius:2px"></div>
<div class="a" style="left:608.8px;top:302.2px;width:17.200000000000045px;height:17.2px;background:linear-gradient(#b0b0b0,#a6a6a6);border:1px solid #8c8c8c;border-bottom-color:#7e7e7e;border-radius:2px"></div>
<div class="a" style="left:627.9px;top:302.2px;width:17.300000000000068px;height:17.2px;background:linear-gradient(#b0b0b0,#a6a6a6);border:1px solid #8c8c8c;border-bottom-color:#7e7e7e;border-radius:2px"></div>
<div class="a" style="left:646.6px;top:302.2px;width:17.199999999999932px;height:17.2px;background:linear-gradient(#b0b0b0,#a6a6a6);border:1px solid #8c8c8c;border-bottom-color:#7e7e7e;border-radius:2px"></div>
<svg style="left:611px;top:304.5px;" width="14" height="12" viewBox="0 0 14 12"><path d="M2 3h4v3h-4zM3 2.5v-1h3v1" fill="#8a8a8a" stroke="#222" stroke-width="0.8"/><path d="M3.5 6.5h4v3h-4z" fill="#7a9a7a" stroke="#222" stroke-width="0.8"/><path d="M8 11v-4l2 -1.5v4zM10.5 9.5v-4.5l1.3 -1v4.5z" fill="#333" stroke="#111" stroke-width="0.6"/></svg>
<svg style="left:630px;top:306px;" width="14" height="10" viewBox="0 0 14 10"><rect x="1" y="1" width="11.5" height="6.5" fill="#c0c0c0" stroke="#555" stroke-width="0.7"/><rect x="3.3" y="2.5" width="8.6" height="4.4" fill="#f0f0f0"/><path d="M2.3 1.5v5.5" stroke="#222" stroke-width="0.7"/><text x="4" y="6.2" font-size="4.2" font-family="Liberation Sans" fill="#222">run</text></svg>
<svg style="left:651.5px;top:307.8px;" width="7" height="7" viewBox="0 0 7 7"><path d="M0.8 0.8L5.8 5.8M5.8 0.8L0.8 5.8" stroke="#111" stroke-width="1.5"/></svg>
<div class="a" style="left:567.5px;top:321px;width:183px;height:1px;background:#999"></div>
<div class="a" style="left:150px;top:70.3px;width:452px;height:281.7px;background:#2a2e31;border-radius:4px 4px 0 0;box-shadow:0.5px 1px 2.5px 0.5px rgba(0,0,0,0.75)"></div>
<div class="a" style="left:150px;top:85px;width:452px;height:267px;background:#e8e8e7;border-bottom:1px solid #fafafa"></div>
<div class="a" style="left:150px;top:70.3px;width:452px;height:17px;background:#2a2e31;border-radius:4px 4px 0 0"></div>
<div class="a" style="left:150px;top:87.3px;width:452px;height:1.2px;background:#f8f8f7"></div>
<div class="a" style="left:150px;top:87.3px;width:1px;height:265px;background:#f6f6f5"></div>
<div class="t" style="left:359.8px;top:76.60px;font-size:7.1px;color:#eeeeec;font-weight:bold;-webkit-text-stroke:0">Load Data</div>
<svg style="left:591.8px;top:76.8px;" width="5" height="5" viewBox="0 0 5 5"><path d="M0.6 0.6L4.2 4.2M4.2 0.6L0.6 4.2" stroke="#eeeeec" stroke-width="1.3"/></svg>
<div class="a" style="left:153.3px;top:90.4px;width:15.099999999999994px;height:16.39999999999999px;background:linear-gradient(#efefee,#e2e1df);border:1px solid #c4c3c0;border-bottom-color:#b2b1ae;border-radius:2.5px"></div>
<svg style="left:155px;top:92px;" width="12" height="12" viewBox="0 0 12 12"><rect x="2.5" y="1.5" width="7.5" height="8.5" fill="#fff" stroke="#bbb" stroke-width="0.5"/><path d="M3.5 9 L4 7 L8.5 2.5 L9.7 3.7 L5.2 8.2z" fill="#f0a020" stroke="#a06010" stroke-width="0.4"/><circle cx="9.3" cy="2.8" r="0.9" fill="#e02020"/></svg>
<div class="a" style="left:175.6px;top:90.4px;width:11.800000000000011px;height:16.39999999999999px;background:linear-gradient(#efefee,#e2e1df);border:1px solid #c4c3c0;border-bottom-color:#b2b1ae;border-radius:2.5px"></div>
<svg style="left:179.5px;top:96px;" width="4" height="5" viewBox="0 0 4 5"><path d="M3 0v4.5L0.2 2.25z" fill="#2e3436"/></svg>
<div class="a" style="left:189.3px;top:90.4px;width:18.299999999999983px;height:16.39999999999999px;background:linear-gradient(#efefee,#e2e1df);border:1px solid #c4c3c0;border-bottom-color:#b2b1ae;border-radius:2.5px"></div>
<div class="t" style="left:189.3px;top:94.70px;width:18.299999999999983px;text-align:center;transform-origin:50% 0;color:#2e3436">test</div>
<div class="a" style="left:209.6px;top:90.4px;width:31.80000000000001px;height:16.39999999999999px;background:linear-gradient(#efefee,#e2e1df);border:1px solid #c4c3c0;border-bottom-color:#b2b1ae;border-radius:2.5px"></div>
<div class="t" style="left:209.6px;top:94.70px;width:31.80000000000001px;text-align:center;transform-origin:50% 0;color:#2e3436">Desktop</div>
<div class="a" style="left:243.5px;top:90.4px;width:22.0px;height:16.39999999999999px;background:linear-gradient(#efefee,#e2e1df);border:1px solid #c4c3c0;border-bottom-color:#b2b1ae;border-radius:2.5px"></div>
<div class="t" style="left:243.5px;top:94.70px;width:22.0px;text-align:center;transform-origin:50% 0;color:#2e3436">IMAP</div>
<div class="a" style="left:267.8px;top:90.4px;width:45.69999999999999px;height:16.39999999999999px;background:linear-gradient(#efefee,#e2e1df);border:1px solid #c4c3c0;border-bottom-color:#b2b1ae;border-radius:2.5px"></div>
<div class="t" style="left:267.8px;top:94.70px;width:45.69999999999999px;text-align:center;transform-origin:50% 0;color:#2e3436">Experimental</div>
<div class="a" style="left:315.6px;top:90.4px;width:26.099999999999966px;height:16.39999999999999px;background:linear-gradient(#efefee,#e2e1df);border:1px solid #c4c3c0;border-bottom-color:#b2b1ae;border-radius:2.5px"></div>
<div class="t" style="left:315.6px;top:94.70px;width:26.099999999999966px;text-align:center;transform-origin:50% 0;color:#2e3436">AP003</div>
<div class="a" style="left:343.5px;top:90.4px;width:20.100000000000023px;height:16.39999999999999px;background:#d6d5d2;border:1px solid #b9b8b5;border-radius:2.5px"></div>
<div class="t" style="left:343.5px;top:94.70px;width:19.899999999999977px;text-align:center;transform-origin:50% 0;color:#2e3436;font-weight:bold">TGA</div>
<div class="a" style="left:372.9px;top:90.4px;width:12.300000000000011px;height:16.39999999999999px;background:linear-gradient(#f2f2f1,#e9e9e8);border:1px solid #d2d1ce;border-radius:2.5px"></div>
<svg style="left:377.5px;top:96px;" width="4" height="5" viewBox="0 0 4 5"><path d="M0.5 0v4.5L3.3 2.25z" fill="#8a8e8f"/></svg>
<div class="a" style="left:390px;top:88px;width:1px;height:242px;background:#cfcfcc"></div>
<div class="a" style="left:152px;top:113px;width:60px;height:118.5px;background:#e8e8e7;border:1px solid #d0cfcc"></div>
<div class="a" style="left:152.5px;top:113.5px;width:52.5px;height:101px;background:#ffffff"></div>
<div class="a" style="left:205px;top:113px;width:6.7px;height:101.5px;background:#c8caca"></div>
<div class="a" style="left:207px;top:114.8px;width:3.2px;height:48px;background:#6e7273;border-radius:1.5px"></div>
<div class="a" style="left:152.5px;top:214.5px;width:59px;height:1px;background:#d0cfcc"></div>
<div class="t" style="left:155.6px;top:115.60px;color:#8a8e8f">Places</div>
<div class="a" style="left:155px;top:124.3px;width:51px;height:0.8px;background:#e0e0de"></div>
<div class="a" style="left:155px;top:149.8px;width:51px;height:0.8px;background:#e0e0de"></div>
<div class="t" style="left:163.7px;top:127.80px;color:#2e3436">Search</div>
<svg style="left:154.5px;top:127px;" width="8" height="8" viewBox="0 0 8 8"><circle cx="3.3" cy="3.3" r="2.3" fill="none" stroke="#2a3a8a" stroke-width="1.3"/><path d="M5 5 L7.2 7.2" stroke="#1a1a1a" stroke-width="1.3"/></svg>
<div class="t" style="left:163.7px;top:140.10px;color:#2e3436">Recently U...</div>
<svg style="left:154.5px;top:139.3px;" width="8" height="8" viewBox="0 0 8 8"><circle cx="3.8" cy="4" r="3.2" fill="#f8e8a8" stroke="#a08a40" stroke-width="0.6"/><path d="M3.8 1.8v2.2h2" stroke="#333" stroke-width="0.6" fill="none"/></svg>
<div class="t" style="left:163.7px;top:154.40px;color:#2e3436">aleplo</div>
<svg style="left:154.5px;top:153.6px;" width="8" height="8" viewBox="0 0 8 8"><path d="M0.5 1.5h3l1 1h3v5h-7z" fill="#5a8ac8" stroke="#3a6aa0" stroke-width="0.5"/><path d="M1.5 4h5" stroke="#a8c8f0" stroke-width="0.6"/></svg>
<div class="t" style="left:163.7px;top:166.30px;color:#2e3436">Desktop</div>
<svg style="left:154.5px;top:165.5px;" width="8" height="8" viewBox="0 0 8 8"><path d="M0.5 1.5h3l1 1h3v5h-7z" fill="#5a8ac8" stroke="#3a6aa0" stroke-width="0.5"/><path d="M1.5 4h5" stroke="#a8c8f0" stroke-width="0.6"/></svg>
<div class="t" style="left:163.7px;top:178.70px;color:#2e3436">File System</div>
<svg style="left:154.5px;top:177.9px;" width="8" height="8" viewBox="0 0 8 8"><rect x="1" y="1" width="6" height="6.5" fill="#e4e4e4" stroke="#9a9a9a" stroke-width="0.6"/><path d="M1.5 6h5" stroke="#777" stroke-width="0.6"/></svg>
<div class="t" style="left:163.7px;top:191.00px;color:#2e3436">test</div>
<svg style="left:154.5px;top:190.2px;" width="8" height="8" viewBox="0 0 8 8"><rect x="0.5" y="2" width="7" height="4.5" fill="#f0f0f0" stroke="#8a8a8a" stroke-width="0.6"/><path d="M1 5.5h6" stroke="#666" stroke-width="0.6"/></svg>
<div class="t" style="left:163.7px;top:202.80px;color:#2e3436">182 GB Vol...</div>
<svg style="left:154.5px;top:202px;" width="8" height="8" viewBox="0 0 8 8"><rect x="1" y="1" width="6" height="6.5" fill="#e4e4e4" stroke="#9a9a9a" stroke-width="0.6"/><path d="M1.5 6h5" stroke="#777" stroke-width="0.6"/></svg>
<div class="a" style="left:154.6px;top:217.5px;width:12.400000000000006px;height:11.800000000000011px;background:linear-gradient(#efefee,#e2e1df);border:1px solid #c4c3c0;border-bottom-color:#b2b1ae;border-radius:2.5px"></div>
<svg style="left:157.5px;top:220.2px;" width="6" height="6" viewBox="0 0 6 6"><path d="M3 0.3v5.4M0.3 3h5.4" stroke="#3a4a6a" stroke-width="1.3"/></svg>
<div class="a" style="left:168.2px;top:217.5px;width:11.300000000000011px;height:11.800000000000011px;background:linear-gradient(#efefee,#e2e1df);border:1px solid #c4c3c0;border-bottom-color:#b2b1ae;border-radius:2.5px"></div>
<svg style="left:171px;top:220.2px;" width="6" height="6" viewBox="0 0 6 6"><path d="M0.3 3h5.4" stroke="#3a4a6a" stroke-width="1.3"/></svg>
<div class="a" style="left:216px;top:112.8px;width:170px;height:98.5px;background:#fff;border:1px solid #c8c7c4"></div>
<div class="a" style="left:379.8px;top:113px;width:6.4px;height:98px;background:#c8caca"></div>
<div class="a" style="left:381.4px;top:114.6px;width:3.2px;height:96px;background:#6e7273;border-radius:1.5px"></div>
<div class="t" style="left:220.7px;top:115.70px;color:#8a8e8f">Name</div>
<svg style="left:304.5px;top:117.8px;" width="4" height="3" viewBox="0 0 4 3"><path d="M0 0h4l-2 2.5z" fill="#8a8e8f"/></svg>
<div class="a" style="left:313.3px;top:113.5px;width:0.8px;height:11px;background:#e4e4e2"></div>
<div class="t" style="left:317.7px;top:115.70px;color:#8a8e8f">Size</div>
<div class="a" style="left:343.3px;top:113.5px;width:0.8px;height:11px;background:#e4e4e2"></div>
<div class="t" style="left:347.7px;top:115.70px;color:#8a8e8f">Modified</div>
<div class="a" style="left:216.5px;top:125.2px;width:164px;height:11.4px;background:#4a90d9"></div>
<svg style="left:218.8px;top:126.3px;" width="7" height="9" viewBox="0 0 7 9"><path d="M0.5 0.5h4l2 2v6h-6z" fill="#f4f4f0" stroke="#b8b090" stroke-width="0.5"/></svg>
<div class="t" style="left:227.6px;top:127.70px;color:#fff">AP003w.txt</div>
<div class="t" style="left:316.5px;top:127.70px;color:#fff">1.3 MB</div>
<div class="t" style="left:346px;top:127.70px;color:#fff">03/16/18</div>
<svg style="left:218.8px;top:138.5px;" width="7" height="9" viewBox="0 0 7 9"><path d="M0.5 0.5h4l2 2v6h-6z" fill="#f4f4f4" stroke="#a0a0a0" stroke-width="0.5"/></svg>
<div class="t" style="left:227.6px;top:140.00px;color:#2e3436">TGA-AP003.sciprj</div>
<div class="t" style="left:316.5px;top:140.00px;color:#2e3436">10.8 MB</div>
<div class="t" style="left:346px;top:140.00px;color:#2e3436">03/18/18</div>
<div class="a" style="left:216.9px;top:216px;width:168.29999999999998px;height:14.800000000000011px;background:linear-gradient(#efefee,#e2e1df);border:1px solid #c4c3c0;border-bottom-color:#b2b1ae;border-radius:2.5px"></div>
<div class="t" style="left:221px;top:219.70px;color:#2e3436">All Files (*)</div>
<svg style="left:375.3px;top:222.2px;" width="5" height="3" viewBox="0 0 5 3"><path d="M0 0h4.4l-2.2 2.8z" fill="#2e3436"/></svg>
<div class="t" style="left:155.5px;top:242.10px;color:#2e3436;transform:scaleX(0.995)">file format:</div>
<div class="a" style="left:192.4px;top:237.5px;width:64.4px;height:15.699999999999989px;background:linear-gradient(#efefee,#e2e1df);border:1px solid #c4c3c0;border-bottom-color:#b2b1ae;border-radius:2.5px"></div>
<div class="t" style="left:196.5px;top:242.10px;color:#2e3436">&lt;automatic&gt;</div>
<svg style="left:246.5px;top:244.3px;" width="5" height="3" viewBox="0 0 5 3"><path d="M0 0h4.4l-2.2 2.8z" fill="#2e3436"/></svg>
<div class="t" style="left:263px;top:242.10px;color:#2e3436">block:</div>
<div class="a" style="left:285px;top:237.5px;width:99.7px;height:15.7px;background:#f4f4f3;border:1px solid #cfcecb;border-radius:2.5px"></div>
<div class="t" style="left:289px;top:242.10px;color:#a0a4a5">Block #1</div>
<svg style="left:375.5px;top:244.3px;" width="5" height="3" viewBox="0 0 5 3"><path d="M0 0h4.4l-2.2 2.8z" fill="#a0a4a5"/></svg>
<div class="a" style="left:153.5px;top:258.6px;width:7.4px;height:7.2px;background:#f8f8f8;border:1px solid #b0afac;border-radius:1.5px"></div>
<div class="t" style="left:163.7px;top:259.10px;color:#2e3436">decimal comma</div>
<div class="a" style="left:152.5px;top:277.4px;width:233px;height:26.8px;border:1px solid #cdccc9;border-radius:2px"></div>
<div class="a" style="left:153.5px;top:274px;width:108px;height:6px;background:#e8e8e7"></div>
<div class="t" style="left:154.3px;top:274.20px;color:#2e3436;transform:scaleX(0.968)">Select columns (0 for point index):</div>
<div class="a" style="left:164.5px;top:285px;width:21.69999999999999px;height:16.19999999999999px;background:#fff;border:1px solid #c4c3c0;border-bottom-color:#b4b3b0;border-radius:2.5px"></div>
<div class="a" style="left:178.7px;top:286px;width:0.8px;height:14.199999999999989px;background:#e2e2e0"></div>
<div class="t" style="left:169.1px;top:289.60px;color:#2e3436;-webkit-text-stroke:0.2px #2e3436">4</div>
<svg style="left:180.0px;top:287.9px;" width="5" height="12" viewBox="0 0 5 12"><path d="M0.2 2.6h4.2L2.3 0.2z M0.2 7.8h4.2L2.3 10.2z" fill="#2e3436"/></svg>
<div class="t" style="left:156.6px;top:289.70px;color:#2e3436">x</div>
<div class="t" style="left:191.8px;top:289.70px;color:#2e3436">y</div>
<div class="a" style="left:200.7px;top:285px;width:22.700000000000017px;height:16.19999999999999px;background:#fff;border:1px solid #c4c3c0;border-bottom-color:#b4b3b0;border-radius:2.5px"></div>
<div class="a" style="left:215.9px;top:286px;width:0.8px;height:14.199999999999989px;background:#e2e2e0"></div>
<div class="t" style="left:205.29999999999998px;top:289.60px;color:#2e3436;-webkit-text-stroke:0.2px #2e3436">3</div>
<svg style="left:217.20000000000002px;top:287.9px;" width="5" height="12" viewBox="0 0 5 12"><path d="M0.2 2.6h4.2L2.3 0.2z M0.2 7.8h4.2L2.3 10.2z" fill="#2e3436"/></svg>
<div class="a" style="left:228.9px;top:289.2px;width:7.9px;height:7.7px;background:#fafafa;border:1px solid #b0afac;border-radius:50%"></div>
<div class="t" style="left:240px;top:289.70px;color:#2e3436">σ</div>
<div class="a" style="left:250.6px;top:285px;width:21.900000000000006px;height:16.19999999999999px;background:#f6f6f5;border:1px solid #c4c3c0;border-bottom-color:#b4b3b0;border-radius:2.5px"></div>
<div class="a" style="left:265.0px;top:286px;width:0.8px;height:14.199999999999989px;background:#e2e2e0"></div>
<div class="t" style="left:255.2px;top:289.60px;color:#a0a4a5;-webkit-text-stroke:0.2px #a0a4a5">3</div>
<svg style="left:266.3px;top:287.9px;" width="5" height="12" viewBox="0 0 5 12"><path d="M0.2 2.6h4.2L2.3 0.2z M0.2 7.8h4.2L2.3 10.2z" fill="#a0a4a5"/></svg>
<div class="t" style="left:277.6px;top:289.70px;color:#2e3436">or</div>
<div class="a" style="left:289.4px;top:289.2px;width:7.9px;height:7.7px;background:#fafafa;border:1px solid #b0afac;border-radius:50%"></div>
<div class="a" style="left:292.1px;top:291.8px;width:2.6px;height:2.6px;background:#2e3436;border-radius:50%"></div>
<div class="t" style="left:300.3px;top:289.70px;color:#2e3436;transform:scaleX(0.98)">σ=max(√y, 1)</div>
<div class="t" style="left:345.5px;top:289.70px;color:#2e3436">or</div>
<div class="a" style="left:358px;top:289.2px;width:7.9px;height:7.7px;background:#fafafa;border:1px solid #b0afac;border-radius:50%"></div>
<div class="t" style="left:368.7px;top:289.70px;color:#2e3436">σ=1</div>
<div class="t" style="left:152.4px;top:314.20px;color:#2e3436">data title:</div>
<div class="a" style="left:186.2px;top:309.8px;width:199.2px;height:16.2px;background:#fff;border:1px solid #c9c8c5;border-radius:2px"></div>
<div class="t" style="left:190.8px;top:314.40px;color:#2e3436">AP003w:4:3</div>
<div class="a" style="left:150px;top:329.3px;width:452px;height:0.8px;background:#d3d2cf"></div>
<div class="a" style="left:300.3px;top:333px;width:43.19999999999999px;height:16.399999999999977px;background:#f0f0ef;border:1px solid #d6d5d2;border-radius:2.5px"></div>
<div class="t" style="left:300.3px;top:337.80px;width:43.19999999999999px;text-align:center;transform-origin:50% 0;color:#a0a4a5">Replace @?</div>
<div class="a" style="left:349.2px;top:333px;width:57.30000000000001px;height:16.399999999999977px;background:linear-gradient(#efefee,#e2e1df);border:1px solid #c4c3c0;border-bottom-color:#b2b1ae;border-radius:2.5px"></div>
<div class="t" style="left:349.2px;top:337.80px;width:57.30000000000001px;text-align:center;transform-origin:50% 0;color:#2e3436">Open in new slot</div>
<div class="a" style="left:412.8px;top:333px;width:38.599999999999966px;height:16.399999999999977px;background:linear-gradient(#efefee,#e2e1df);border:1px solid #c4c3c0;border-bottom-color:#b2b1ae;border-radius:2.5px"></div>
<svg style="left:416.8px;top:337.3px;" width="8" height="8" viewBox="0 0 8 8"><path d="M1 1L7 7M7 1L1 7" stroke="#7a7e7f" stroke-width="1.6"/><path d="M1 1L7 7M7 1L1 7" stroke="#c8c8c8" stroke-width="0.5"/></svg>
<div class="t" style="left:426.5px;top:337.80px;color:#2e3436">Close</div>
<div class="a" style="left:394.6px;top:90px;width:205.1px;height:99.5px;background:#fff;border:1px solid #c8c7c4;border-bottom:none"></div>
<div class="a" style="left:593.3px;top:90.5px;width:6.4px;height:99px;background:#c5c7c7"></div>
<div class="a" style="left:594.9px;top:92px;width:3.2px;height:20px;background:#6e7273;border-radius:1.5px"></div>
<div class="t" style="left:348.7px;top:92.20px;width:80px;text-align:right;transform-origin:100% 0;color:#2e3436">Index</div>
<div class="t" style="left:345.3px;top:101.50px;width:80px;text-align:right;transform-origin:100% 0;color:#2e3436">[#]</div>
<div class="t" style="left:375px;top:92.20px;width:80px;text-align:right;transform-origin:100% 0;color:#2e3436">t</div>
<div class="t" style="left:373.7px;top:101.50px;width:80px;text-align:right;transform-origin:100% 0;color:#2e3436">[s]</div>
<div class="t" style="left:408px;top:92.20px;width:80px;text-align:right;transform-origin:100% 0;color:#2e3436">Poids</div>
<div class="t" style="left:407px;top:101.50px;width:80px;text-align:right;transform-origin:100% 0;color:#2e3436">[mg]</div>
<div class="t" style="left:437px;top:92.20px;width:80px;text-align:right;transform-origin:100% 0;color:#2e3436">Tr</div>
<div class="t" style="left:436.4px;top:101.50px;width:80px;text-align:right;transform-origin:100% 0;color:#2e3436">[°C]</div>
<div class="a" style="left:395px;top:90px;width:199px;height:99.5px;overflow:hidden">
<div class="t" style="left:-51.5px;top:20.80px;width:80px;text-align:right;transform-origin:100% 0;color:#2e3436;transform:scaleX(0.94)">0</div>
<div class="t" style="left:-4.399999999999977px;top:20.80px;width:80px;text-align:right;transform-origin:100% 0;color:#2e3436;transform:scaleX(0.94)">0.00000e+000</div>
<div class="t" style="left:44.200000000000045px;top:20.80px;width:80px;text-align:right;transform-origin:100% 0;color:#2e3436;transform:scaleX(0.94)">6.29500e+000</div>
<div class="t" style="left:91.89999999999998px;top:20.80px;width:80px;text-align:right;transform-origin:100% 0;color:#2e3436;transform:scaleX(0.94)">2.50000e+001</div>
<div class="t" style="left:-51.5px;top:30.10px;width:80px;text-align:right;transform-origin:100% 0;color:#2e3436;transform:scaleX(0.94)">1</div>
<div class="t" style="left:-4.399999999999977px;top:30.10px;width:80px;text-align:right;transform-origin:100% 0;color:#2e3436;transform:scaleX(0.94)">1.00000e+000</div>
<div class="t" style="left:44.200000000000045px;top:30.10px;width:80px;text-align:right;transform-origin:100% 0;color:#2e3436;transform:scaleX(0.94)">6.29500e+000</div>
<div class="t" style="left:91.89999999999998px;top:30.10px;width:80px;text-align:right;transform-origin:100% 0;color:#2e3436;transform:scaleX(0.94)">2.50333e+001</div>
<div class="t" style="left:-51.5px;top:39.40px;width:80px;text-align:right;transform-origin:100% 0;color:#2e3436;transform:scaleX(0.94)">2</div>
<div class="t" style="left:-4.399999999999977px;top:39.40px;width:80px;text-align:right;transform-origin:100% 0;color:#2e3436;transform:scaleX(0.94)">2.00000e+000</div>
<div class="t" style="left:44.200000000000045px;top:39.40px;width:80px;text-align:right;transform-origin:100% 0;color:#2e3436;transform:scaleX(0.94)">6.29500e+000</div>
<div class="t" style="left:91.89999999999998px;top:39.40px;width:80px;text-align:right;transform-origin:100% 0;color:#2e3436;transform:scaleX(0.94)">2.50667e+001</div>
<div class="t" style="left:-51.5px;top:48.70px;width:80px;text-align:right;transform-origin:100% 0;color:#2e3436;transform:scaleX(0.94)">3</div>
<div class="t" style="left:-4.399999999999977px;top:48.70px;width:80px;text-align:right;transform-origin:100% 0;color:#2e3436;transform:scaleX(0.94)">3.00000e+000</div>
<div class="t" style="left:44.200000000000045px;top:48.70px;width:80px;text-align:right;transform-origin:100% 0;color:#2e3436;transform:scaleX(0.94)">6.29500e+000</div>
<div class="t" style="left:91.89999999999998px;top:48.70px;width:80px;text-align:right;transform-origin:100% 0;color:#2e3436;transform:scaleX(0.94)">2.51000e+001</div>
<div class="t" style="left:-51.5px;top:58.00px;width:80px;text-align:right;transform-origin:100% 0;color:#2e3436;transform:scaleX(0.94)">4</div>
<div class="t" style="left:-4.399999999999977px;top:58.00px;width:80px;text-align:right;transform-origin:100% 0;color:#2e3436;transform:scaleX(0.94)">4.00000e+000</div>
<div class="t" style="left:44.200000000000045px;top:58.00px;width:80px;text-align:right;transform-origin:100% 0;color:#2e3436;transform:scaleX(0.94)">6.29500e+000</div>
<div class="t" style="left:91.89999999999998px;top:58.00px;width:80px;text-align:right;transform-origin:100% 0;color:#2e3436;transform:scaleX(0.94)">2.51333e+001</div>
<div class="t" style="left:-51.5px;top:67.30px;width:80px;text-align:right;transform-origin:100% 0;color:#2e3436;transform:scaleX(0.94)">5</div>
<div class="t" style="left:-4.399999999999977px;top:67.30px;width:80px;text-align:right;transform-origin:100% 0;color:#2e3436;transform:scaleX(0.94)">5.00000e+000</div>
<div class="t" style="left:44.200000000000045px;top:67.30px;width:80px;text-align:right;transform-origin:100% 0;color:#2e3436;transform:scaleX(0.94)">6.29500e+000</div>
<div class="t" style="left:91.89999999999998px;top:67.30px;width:80px;text-align:right;transform-origin:100% 0;color:#2e3436;transform:scaleX(0.94)">2.51667e+001</div>
<div class="t" style="left:-51.5px;top:76.60px;width:80px;text-align:right;transform-origin:100% 0;color:#2e3436;transform:scaleX(0.94)">6</div>
<div class="t" style="left:-4.399999999999977px;top:76.60px;width:80px;text-align:right;transform-origin:100% 0;color:#2e3436;transform:scaleX(0.94)">6.00000e+000</div>
<div class="t" style="left:44.200000000000045px;top:76.60px;width:80px;text-align:right;transform-origin:100% 0;color:#2e3436;transform:scaleX(0.94)">6.29500e+000</div>
<div class="t" style="left:91.89999999999998px;top:76.60px;width:80px;text-align:right;transform-origin:100% 0;color:#2e3436;transform:scaleX(0.94)">2.52000e+001</div>
<div class="t" style="left:-51.5px;top:85.90px;width:80px;text-align:right;transform-origin:100% 0;color:#2e3436;transform:scaleX(0.94)">7</div>
<div class="t" style="left:-4.399999999999977px;top:85.90px;width:80px;text-align:right;transform-origin:100% 0;color:#2e3436;transform:scaleX(0.94)">7.00000e+000</div>
<div class="t" style="left:44.200000000000045px;top:85.90px;width:80px;text-align:right;transform-origin:100% 0;color:#2e3436;transform:scaleX(0.94)">6.29500e+000</div>
<div class="t" style="left:91.89999999999998px;top:85.90px;width:80px;text-align:right;transform-origin:100% 0;color:#2e3436;transform:scaleX(0.94)">2.52333e+001</div>
<div class="t" style="left:-51.5px;top:95.20px;width:80px;text-align:right;transform-origin:100% 0;color:#2e3436;transform:scaleX(0.94)">8</div>
<div class="t" style="left:-4.399999999999977px;top:95.20px;width:80px;text-align:right;transform-origin:100% 0;color:#2e3436;transform:scaleX(0.94)">8.00000e+000</div>
<div class="t" style="left:44.200000000000045px;top:95.20px;width:80px;text-align:right;transform-origin:100% 0;color:#2e3436;transform:scaleX(0.94)">6.29500e+000</div>
<div class="t" style="left:91.89999999999998px;top:95.20px;width:80px;text-align:right;transform-origin:100% 0;color:#2e3436;transform:scaleX(0.94)">2.52667e+001</div>
</div>
<div class="a" style="left:396.2px;top:196.3px;width:7px;height:7.6px;background:#fafafa;border:1px solid #a9a8a5;border-radius:1.5px"></div>
<svg style="left:397px;top:197.5px;" width="6" height="6" viewBox="0 0 6 6"><path d="M0.6 2.9 L2.3 4.7 L5.3 0.9" stroke="#1a1e20" stroke-width="1.6" fill="none"/></svg>
<div class="a" style="left:405.2px;top:194.6px;width:58.3px;height:10.4px;border:1px solid #d2d1ce;border-radius:2px"></div>
<div class="t" style="left:406.2px;top:196.80px;color:#2e3436">file preview (64kB)</div>
<div class="a" style="left:392px;top:209.8px;width:210px;height:0.8px;background:#d3d2cf"></div>
<div class="a" style="left:392.5px;top:212.8px;width:209px;height:99.5px;background:#f6f6f5"></div>
<div class="a" style="left:394.9px;top:215.2px;width:205.3px;height:95.6px;background:#424242;border:1px solid #1e1e1e;border-right-color:#2a2a2a;border-bottom-color:#2a2a2a"></div>
<div class="a" style="left:395.5px;top:226.5px;width:2.2px;height:0.8px;background:#e0e0e0"></div>
<div class="t" style="left:397.8px;top:224.10px;font-size:6.4px;color:#e8e8e8">6</div>
<div class="a" style="left:395.5px;top:260.5px;width:2.2px;height:0.8px;background:#e0e0e0"></div>
<div class="t" style="left:397.8px;top:258.10px;font-size:6.4px;color:#e8e8e8">5</div>
<div class="a" style="left:395.5px;top:294.5px;width:2.2px;height:0.8px;background:#e0e0e0"></div>
<div class="t" style="left:397.8px;top:292.10px;font-size:6.4px;color:#e8e8e8">4</div>
<div class="a" style="left:455.5px;top:300.5px;width:0.8px;height:1.5px;background:#e0e0e0"></div>
<div class="t" style="left:445.8px;top:303.20px;width:20.0px;text-align:center;transform-origin:50% 0;font-size:6.4px;color:#e8e8e8">200</div>
<div class="a" style="left:501.9px;top:300.5px;width:0.8px;height:1.5px;background:#e0e0e0"></div>
<div class="t" style="left:492.2px;top:303.20px;width:20.000000000000057px;text-align:center;transform-origin:50% 0;font-size:6.4px;color:#e8e8e8">400</div>
<div class="a" style="left:548.1px;top:300.5px;width:0.8px;height:1.5px;background:#e0e0e0"></div>
<div class="t" style="left:538.4px;top:303.20px;width:20.0px;text-align:center;transform-origin:50% 0;font-size:6.4px;color:#e8e8e8">600</div>
<svg style="left:0;top:0" width="752" height="423"><path d="M415.6 216.5 C425 233 430 241 437.2 244.8 C442 248 446 250 449.6 251 C460 254 470 256 476.9 258.4 C479 259.5 481 261 483 264 C487 270 490 277 493 280 C497 284 502 286 508 287.8 C515 290 521 291 530 293.5 C540 296 545 297.5 566.5 299 C575 300 585 300.6 595 301.8" fill="none" stroke="#1ee01e" stroke-width="1.1"/></svg>
<div class="a" style="left:395.7px;top:317px;width:7.4px;height:7.5px;background:#fafafa;border:1px solid #b0afac;border-radius:1.5px"></div>
<svg style="left:396.8px;top:318.4px;" width="6" height="6" viewBox="0 0 6 6"><path d="M0.6 2.9 L2.3 4.7 L5.3 0.9" stroke="#1a1e20" stroke-width="1.6" fill="none"/></svg>
<div class="t" style="left:406px;top:317.60px;color:#2e3436;transform:scaleX(0.98)">plot</div>
</body></html>
